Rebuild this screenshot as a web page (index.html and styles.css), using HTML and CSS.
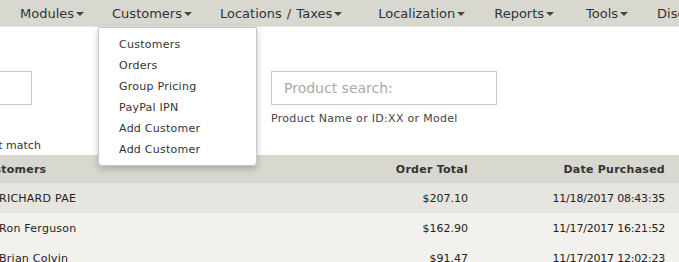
FILE: index.html
```html
<!DOCTYPE html>
<html lang="en">
<head>
  <meta charset="UTF-8" />
  <title>Admin - Orders</title>
  <link rel="stylesheet" href="styles.css">
</head>
<body>
  <nav class="menu">
    <a class="menu-item">Modules<span class="caret"></span></a>
    <a class="menu-item open">Customers<span class="caret"></span>
      <ul class="dropdown">
        <li>Customers</li>
        <li>Orders</li>
        <li>Group Pricing</li>
        <li>PayPal IPN</li>
        <li>Add Customer</li>
        <li>Add Customer</li>
      </ul>
    </a>
    <a class="menu-item">Locations / Taxes<span class="caret"></span></a>
    <a class="menu-item">Localization<span class="caret"></span></a>
    <a class="menu-item">Reports<span class="caret"></span></a>
    <a class="menu-item">Tools<span class="caret"></span></a>
    <a class="menu-item">Discounts</a>
  </nav>

  <section class="search-row">
    <div class="field field-left">
      <input type="text" />
      <div class="hint hint-low">Exact match</div>
    </div>
    <div class="field field-product">
      <input type="text" placeholder="Product search:" />
      <div class="hint">Product Name or ID:XX or Model</div>
    </div>
  </section>

  <section class="orders">
    <div class="row head">
      <div class="cell name head-name">Customers</div>
      <div class="cell total">Order Total</div>
      <div class="cell date">Date Purchased</div>
    </div>
    <div class="row odd">
      <div class="cell name">RICHARD PAE</div>
      <div class="cell total">$207.10</div>
      <div class="cell date">11/18/2017 08:43:35</div>
    </div>
    <div class="row">
      <div class="cell name">Ron Ferguson</div>
      <div class="cell total">$162.90</div>
      <div class="cell date">11/17/2017 16:21:52</div>
    </div>
    <div class="row">
      <div class="cell name">Brian Colvin</div>
      <div class="cell total">$91.47</div>
      <div class="cell date">11/17/2017 12:02:23</div>
    </div>
  </section>
</body>
</html>
```

FILE: styles.css
```css
* {
  margin: 0; padding: 0; box-sizing: border-box;
  font-family: 'DejaVu Sans', Verdana, sans-serif;
}
body {
  background: #fff;
  color: #333;
  overflow: hidden;
  width: 679px;
  height: 262px;
}
.menu {
  display: flex;
  height: 27px;
  background: #d8d8d0;
  border-bottom: 1px solid #e4e4de;
  padding-left: 6px;
  white-space: nowrap;
  word-spacing: 1px;
}
.menu-item {
  position: relative;
  display: flex;
  align-items: center;
  padding: 0 14px;
  font-size: 13px;
  color: #333;
}
.menu-item:nth-child(3) {
  padding-right: 22px;
}
.menu-item:nth-child(4) {
  padding-right: 15px;
}
.menu-item:nth-child(5) {
  padding-right: 18px;
}
.menu-item:nth-child(6) {
  padding-right: 15px;
}
.caret {
  display: inline-block;
  margin-left: 2px;
  margin-top: 2px;
  border-left: 4px solid transparent;
  border-right: 4px solid transparent;
  border-top: 4px solid #444;
}
.dropdown {
  position: absolute;
  top: 27px;
  left: 0;
  width: 159px;
  list-style: none;
  background: #fff;
  border: 1px solid #c8c8c8;
  border-radius: 0 0 4px 4px;
  box-shadow: 0 3px 7px rgba(0,0,0,0.22);
  padding: 6px 0 5px;
  z-index: 10;
  word-spacing: 0;
}
.dropdown li {
  font-size: 11px;
  line-height: 21px;
  padding-left: 20px;
  letter-spacing: 0.25px;
  color: #333;
}
.search-row {
  display: flex;
  gap: 239px;
  margin-left: -168px;
  padding-top: 44px;
  height: 126px;
}
.field input {
  display: block;
  height: 34px;
  border: 1px solid #ccc;
  padding: 0 12px;
  font-size: 14px;
  color: #333;
  outline: none;
}
.field input::placeholder {
  color: #aaa;
}
.field-left {
  width: 200px;
}
.field-left input {
  width: 200px;
}
.field-product input {
  width: 226px;
}
.hint {
  font-size: 11px;
  color: #444;
  margin-top: 7px;
  letter-spacing: 0.3px;
  white-space: nowrap;
}
.hint-low {
  margin-top: 34px;
  margin-left: 140px;
  letter-spacing: 0;
  color: #333;
}
.orders {
  margin-top: 2px;
}
.row {
  display: grid;
  grid-template-columns: 1fr 120px 197px;
  height: 30px;
  align-items: center;
  padding-right: 14px;
  background: #f2f1ed;
  font-size: 11px;
  color: #222;
}
.row.head {
  height: 28px;
  background: #d8d8d0;
  font-weight: bold;
  letter-spacing: 0.25px;
  color: #333;
}
.row.odd {
  background: #e6e5e0;
}
.cell.name {
  margin-left: -1px;
  letter-spacing: 0.25px;
  white-space: nowrap;
}
.cell.head-name {
  margin-left: -22px;
}
.total, .date {
  text-align: right;
}
.row .date {
  letter-spacing: -0.2px;
}
.row.head .date {
  letter-spacing: 0.25px;
}
```
